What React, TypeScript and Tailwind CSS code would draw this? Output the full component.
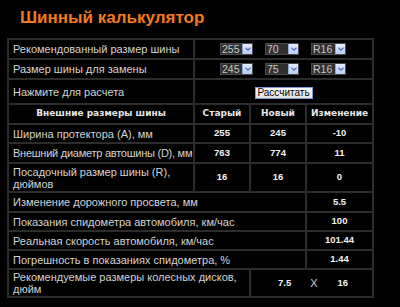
import React from "react";

const Sel = ({ v, w }: { v: string; w: string }) => (
  <div className={`flex h-[12px] ${w} border border-[#4a4a4a] bg-[#303030]`}>
    <div className="flex-1 overflow-hidden whitespace-nowrap pl-[1px] text-[10.5px] leading-[10px] text-[#c8c8c8]">{v}</div>
    <div className="flex w-[10px] items-center justify-center border-l border-[#8ea6d8] bg-gradient-to-b from-[#e4ecfc] to-[#b8ccf4]">
      <svg width="6" height="4" viewBox="0 0 6 4">
        <path d="M0.5 0.8 L3 3.2 L5.5 0.8" fill="none" stroke="#4d6fb8" strokeWidth="1.2" />
      </svg>
    </div>
  </div>
);

const Label = ({ children, span, extra }: { children: React.ReactNode; span?: string; extra?: string }) => (
  <div className={`${span ?? ""} ${extra ?? ""} flex items-center bg-black pl-[4px] text-[11px] leading-[12px] text-[#d4d4d4]`}>
    {children}
  </div>
);

const Num = ({ children }: { children: React.ReactNode }) => (
  <div className="flex items-center justify-center bg-black text-[9.5px] font-bold text-[#f2f2f2]">
    {children}
  </div>
);

const Head = ({ children }: { children: React.ReactNode }) => (
  <div className="flex items-center justify-center bg-black text-[9px] font-bold text-[#e6e6e6] [font-family:'DejaVu_Sans',Verdana,sans-serif]">
    {children}
  </div>
);

export default function App() {
  return (
    <div className="h-[307px] w-[400px] overflow-hidden bg-black [font-family:'Liberation_Sans',Arial,sans-serif]">
      <div className="h-[38px] pl-[20px] pt-[7px] text-[17px] font-bold leading-[22px] text-[#f27a1e]">
        Шинный калькулятор
      </div>
      <div className="ml-[7px] grid w-[367px] grid-cols-[184px_54px_54px_65px] grid-rows-[18px_18px_23px_18px_17px_18px_27px_18px_17px_17px_17px_26px] gap-[2px] border-2 border-[#2c2c2c] bg-[#2c2c2c]">
        <Label>Рекомендованный размер шины</Label>
        <div className="col-span-3 flex items-center gap-[12px] bg-black pl-[25px]">
          <Sel v="255" w="w-[33px]" />
          <Sel v="70" w="w-[34px]" />
          <Sel v="R16" w="w-[35px]" />
        </div>
        <Label>Размер шины для замены</Label>
        <div className="col-span-3 flex items-center gap-[12px] bg-black pl-[25px]">
          <Sel v="245" w="w-[33px]" />
          <Sel v="75" w="w-[34px]" />
          <Sel v="R16" w="w-[35px]" />
        </div>
        <Label>Нажмите для расчета</Label>
        <div className="col-span-3 flex items-center justify-center bg-black pt-[3px]">
          <div className="flex h-[12px] w-[58px] items-center justify-center border border-[#7f9bd0] bg-gradient-to-b from-[#fbfbfb] to-[#e2e2e2] text-[10px] leading-[10px] text-black">
            Рассчитать
          </div>
        </div>
        <Head>Внешние размеры шины</Head>
        <Head>Старый</Head>
        <Head>Новый</Head>
        <Head>Изменение</Head>
        <Label>Ширина протектора (A), мм</Label>
        <Num>255</Num>
        <Num>245</Num>
        <Num>-10</Num>
        <Label extra="whitespace-nowrap tracking-[-0.25px]">Внешний диаметр автошины (D), мм</Label>
        <Num>763</Num>
        <Num>774</Num>
        <Num>11</Num>
        <Label>
          Посадочный размер шины (R),
          <br />
          дюймов
        </Label>
        <Num>16</Num>
        <Num>16</Num>
        <Num>0</Num>
        <Label span="col-span-3">Изменение дорожного просвета, мм</Label>
        <Num>5.5</Num>
        <Label span="col-span-3">Показания спидометра автомобиля, км/час</Label>
        <Num>100</Num>
        <Label span="col-span-3">Реальная скорость автомобиля, км/час</Label>
        <Num>101.44</Num>
        <Label span="col-span-3">Погрешность в показаниях спидометра, %</Label>
        <Num>1.44</Num>
        <Label span="col-span-2">
          Рекомендуемые размеры колесных дисков,
          <br />
          дюйм
        </Label>
        <div className="col-span-2 flex items-center bg-black text-[9.5px]">
          <span className="ml-[27px] font-bold text-[#f2f2f2]">7.5</span>
          <span className="ml-[19px] text-[11px] text-[#d0d0d0]">X</span>
          <span className="ml-[20px] font-bold text-[#f2f2f2]">16</span>
        </div>
      </div>
    </div>
  );
}
